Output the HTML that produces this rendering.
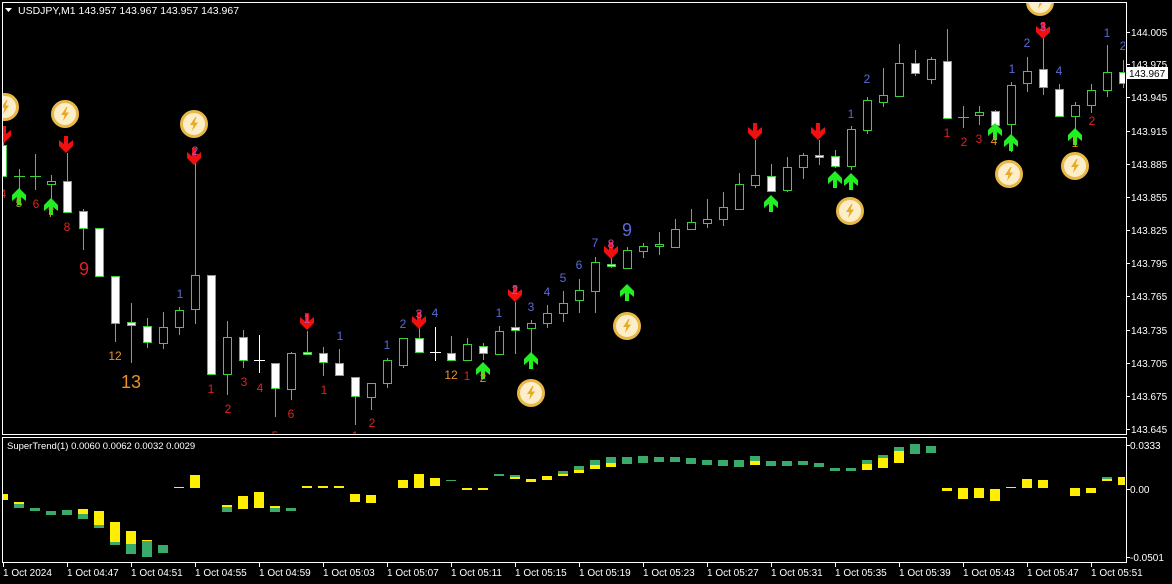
<!DOCTYPE html>
<html><head><meta charset="utf-8"><style>
html,body{margin:0;padding:0;background:#000;}
svg{display:block;font-family:"Liberation Sans",sans-serif;}
</style></head><body>
<svg width="1172" height="584" viewBox="0 0 1172 584" xmlns="http://www.w3.org/2000/svg">
<defs>
<clipPath id="cm"><rect x="3" y="3" width="1122" height="431"/></clipPath>
<clipPath id="ci"><rect x="3" y="439" width="1122" height="123"/></clipPath>
<g id="bolt"><circle r="12.5" fill="#fbeec8" stroke="#e9b847" stroke-width="3"/><path d="M1.5,-7 L-4,1 L-0.5,1 L-2,7 L4,-1.5 L0.5,-1.5 L2.5,-7 Z" fill="#e8a925"/></g>
<path id="dn" d="M-2,0 h4 v8 l5,-4 v6 l-7,7 l-7,-7 v-6 l5,4 z" fill="#f01010"/>
<path id="up" d="M-2,17 h4 v-8 l5,4 v-6 l-7,-7 l-7,7 v6 l5,-4 z" fill="#22ee22"/>
</defs>
<rect width="1172" height="584" fill="#000"/>
<!-- frames -->
<rect x="2.5" y="2.5" width="1124" height="432" fill="none" stroke="#fff"/>
<rect x="2.5" y="437.5" width="1124" height="125" fill="none" stroke="#fff"/>
<g clip-path="url(#cm)" shape-rendering="crispEdges" stroke="#3fcf3f" stroke-width="1">
<!-- wicks -->
<path fill="none" d="M3.5,140V176M19.5,169V190M35.5,154V190M51.5,175V199M67.5,153V212M83.5,209V250M99.5,228V276M115.5,276V342M131.5,303V363M147.5,318V348M163.5,312V349M179.5,307V335M195.5,160V324M211.5,275V374M227.5,321V395M243.5,330V368M275.5,363V417M291.5,352V400M307.5,331V355M323.5,347V376M339.5,349V376M355.5,377V425M371.5,383V410M387.5,358V388M403.5,338V368M419.5,328V352M451.5,336V360M467.5,338V360M483.5,343V360M499.5,326V355M515.5,302V354M531.5,320V355M547.5,305V328M563.5,291V322M579.5,279V313M595.5,257V313M611.5,257V268M627.5,247V268M643.5,243V258M659.5,232V255M675.5,219V248M691.5,209V229M707.5,199V228M723.5,192V226M739.5,173V209M755.5,140V188M771.5,164V191M787.5,157V192M803.5,153V179M819.5,140V165M835.5,150V168M851.5,126V170M867.5,97V134M883.5,68V107M899.5,44V96M915.5,50V76M931.5,57V84M947.5,29V118M963.5,106V128M979.5,106V125M995.5,110V126M1011.5,82V152M1027.5,57V92M1043.5,33V95M1059.5,84V116M1075.5,102V146M1091.5,84V113M1107.5,45V97M1123.5,60V88"/>
<path fill="none" d="M14,176.5H25M30,176.5H41M958,117.5H969"/>
<path fill="none" stroke="#fff" d="M259.5,335V373M254,360.5H265M435.5,327V361M430,352.5H441"/>
<!-- hollow bull bodies -->
<g fill="#000">
<rect x="47.5" y="181.5" width="8" height="3"/><rect x="159.5" y="327.5" width="8" height="16"/><rect x="175.5" y="310.5" width="8" height="17"/><rect x="191.5" y="275.5" width="8" height="34"/><rect x="223.5" y="337.5" width="8" height="37"/><rect x="287.5" y="353.5" width="8" height="36"/><rect x="367.5" y="383.5" width="8" height="14"/><rect x="383.5" y="360.5" width="8" height="23"/><rect x="399.5" y="338.5" width="8" height="27"/><rect x="463.5" y="344.5" width="8" height="16"/><rect x="495.5" y="331.5" width="8" height="23"/><rect x="527.5" y="323.5" width="8" height="5"/><rect x="543.5" y="313.5" width="8" height="10"/><rect x="559.5" y="303.5" width="8" height="10"/><rect x="575.5" y="290.5" width="8" height="10"/><rect x="591.5" y="262.5" width="8" height="29"/><rect x="623.5" y="250.5" width="8" height="18"/><rect x="639.5" y="246.5" width="8" height="5"/><rect x="655.5" y="244.5" width="8" height="2"/><rect x="671.5" y="229.5" width="8" height="18"/><rect x="687.5" y="222.5" width="8" height="7"/><rect x="703.5" y="219.5" width="8" height="4"/><rect x="719.5" y="207.5" width="8" height="12"/><rect x="735.5" y="184.5" width="8" height="25"/><rect x="751.5" y="175.5" width="8" height="10"/><rect x="783.5" y="167.5" width="8" height="23"/><rect x="799.5" y="155.5" width="8" height="12"/><rect x="847.5" y="129.5" width="8" height="37"/><rect x="863.5" y="100.5" width="8" height="30"/><rect x="879.5" y="95.5" width="8" height="7"/><rect x="895.5" y="63.5" width="8" height="33"/><rect x="927.5" y="59.5" width="8" height="20"/><rect x="975.5" y="112.5" width="8" height="3"/><rect x="1007.5" y="85.5" width="8" height="39"/><rect x="1023.5" y="71.5" width="8" height="12"/><rect x="1071.5" y="105.5" width="8" height="11"/><rect x="1087.5" y="90.5" width="8" height="15"/><rect x="1103.5" y="72.5" width="8" height="18"/>
</g>
<!-- white bear bodies -->
<g fill="#fff">
<rect x="-1.5" y="145.5" width="8" height="31"/><rect x="63.5" y="181.5" width="8" height="31"/><rect x="79.5" y="211.5" width="8" height="17"/><rect x="95.5" y="228.5" width="8" height="48"/><rect x="111.5" y="276.5" width="8" height="47"/><rect x="127.5" y="322.5" width="8" height="3"/><rect x="143.5" y="326.5" width="8" height="16"/><rect x="207.5" y="275.5" width="8" height="99"/><rect x="239.5" y="337.5" width="8" height="23"/><rect x="271.5" y="363.5" width="8" height="25"/><rect x="303.5" y="352.5" width="8" height="2"/><rect x="319.5" y="353.5" width="8" height="9"/><rect x="335.5" y="363.5" width="8" height="12"/><rect x="351.5" y="377.5" width="8" height="19"/><rect x="415.5" y="338.5" width="8" height="14"/><rect x="447.5" y="353.5" width="8" height="7"/><rect x="479.5" y="346.5" width="8" height="7"/><rect x="511.5" y="327.5" width="8" height="3"/><rect x="607.5" y="264.5" width="8" height="2"/><rect x="767.5" y="176.5" width="8" height="15"/><rect x="815.5" y="155.5" width="8" height="2"/><rect x="831.5" y="156.5" width="8" height="10"/><rect x="911.5" y="63.5" width="8" height="10"/><rect x="943.5" y="61.5" width="8" height="57"/><rect x="991.5" y="111.5" width="8" height="14"/><rect x="1039.5" y="69.5" width="8" height="18"/><rect x="1055.5" y="89.5" width="8" height="27"/><rect x="1119.5" y="72.5" width="8" height="11"/>
</g>
</g>
<g clip-path="url(#cm)">
<!-- arrows -->
<use href="#dn" x="4" y="126"/><use href="#dn" x="66" y="136"/><use href="#dn" x="194" y="148"/><use href="#dn" x="307" y="313"/><use href="#dn" x="419" y="312"/><use href="#dn" x="515" y="285"/><use href="#dn" x="611" y="242"/><use href="#dn" x="755" y="123"/><use href="#dn" x="818" y="123"/><use href="#dn" x="1043" y="22"/>
<use href="#up" x="19" y="188"/><use href="#up" x="51" y="198"/><use href="#up" x="483" y="362"/><use href="#up" x="531" y="352"/><use href="#up" x="627" y="284"/><use href="#up" x="771" y="195"/><use href="#up" x="835" y="171"/><use href="#up" x="851" y="173"/><use href="#up" x="995" y="123"/><use href="#up" x="1011" y="134"/><use href="#up" x="1075" y="128"/>
<use href="#bolt" x="5" y="107"/><use href="#bolt" x="65" y="114"/><use href="#bolt" x="194" y="124"/><use href="#bolt" x="531" y="393"/><use href="#bolt" x="627" y="326"/><use href="#bolt" x="850" y="211"/><use href="#bolt" x="1009" y="174"/><use href="#bolt" x="1075" y="166"/><use href="#bolt" x="1040" y="2"/>
<!-- numbers -->
<g font-size="12" text-anchor="middle">
<g fill="#e02020">
<text x="3" y="198">4</text><text x="36" y="208">6</text><text x="67" y="231">8</text><text x="84" y="275" font-size="18">9</text><text x="211" y="393">1</text><text x="228" y="413">2</text><text x="244" y="386">3</text><text x="260" y="392">4</text><text x="291" y="418">6</text><text x="275" y="440">5</text><text x="324" y="394">1</text><text x="372" y="427">2</text><text x="355" y="440">1</text><text x="467" y="380">1</text><text x="947" y="137">1</text><text x="964" y="146">2</text><text x="979" y="143">3</text><text x="1092" y="125">2</text>
</g>
<g fill="#e8902a">
<text x="115" y="360">12</text><text x="131" y="388" font-size="18">13</text><text x="451" y="379">12</text><text x="19" y="207" fill="#a8a020">5</text><text x="51" y="217" fill="#a8a020">7</text><text x="483" y="382">2</text><text x="994" y="145">4</text><text x="1075" y="147">1</text>
</g>
<g fill="#5a6ad8">
<text x="180" y="298">1</text><text x="340" y="340">1</text><text x="387" y="349">1</text><text x="403" y="328">2</text><text x="435" y="317">4</text><text x="499" y="317">1</text><text x="531" y="311">3</text><text x="547" y="296">4</text><text x="563" y="282">5</text><text x="579" y="269">6</text><text x="595" y="247">7</text><text x="627" y="236" font-size="18">9</text><text x="851" y="118">1</text><text x="867" y="83">2</text><text x="1012" y="73">1</text><text x="1027" y="47">2</text><text x="1059" y="75">4</text><text x="1107" y="37">1</text><text x="1123" y="50">2</text>
</g>
<g fill="#c050b0">
<text x="195" y="155">2</text><text x="307" y="323">1</text><text x="419" y="318">3</text><text x="515" y="294">2</text><text x="611" y="248">8</text><text x="1043" y="31">3</text>
</g>
</g>
</g>
<!-- title -->
<path d="M5,8 h7 l-3.5,4 z" fill="#fff"/>
<text x="18" y="14" font-size="10.5" fill="#fff">USDJPY,M1  143.957 143.967 143.957 143.967</text>
<!-- price axis -->
<g font-size="10" fill="#fff" shape-rendering="crispEdges">
<path stroke="#fff" d="M1127,32.5h3M1127,64.5h3M1127,97.5h3M1127,131.5h3M1127,164.5h3M1127,197.5h3M1127,230.5h3M1127,263.5h3M1127,296.5h3M1127,330.5h3M1127,363.5h3M1127,396.5h3M1127,429.5h3M1127,445.5h3M1127,489.5h3M1127,557.5h3"/>
<text x="1131" y="36">144.005</text><text x="1131" y="68">143.975</text><text x="1131" y="101">143.945</text><text x="1131" y="135">143.915</text><text x="1131" y="168">143.885</text><text x="1131" y="201">143.855</text><text x="1131" y="234">143.825</text><text x="1131" y="267">143.795</text><text x="1131" y="300">143.765</text><text x="1131" y="334">143.735</text><text x="1131" y="367">143.705</text><text x="1131" y="400">143.675</text><text x="1131" y="433">143.645</text>
<rect x="1127" y="67" width="41" height="12" fill="#fff"/><text x="1129" y="77" fill="#000">143.967</text>
<text x="1130" y="449">0.0333</text><text x="1130" y="493">0.00</text><text x="1130" y="561">-0.0501</text>
</g>
<!-- indicator -->
<text x="7" y="449" font-size="9.5" fill="#fff">SuperTrend(1) 0.0060 0.0062 0.0032 0.0029</text>
<g clip-path="url(#ci)" shape-rendering="crispEdges">
<g fill="#ffee00">
<rect x="-2" y="494" width="10" height="6"/><rect x="14" y="502" width="10" height="2"/><rect x="78" y="509" width="10" height="5"/><rect x="94" y="511" width="10" height="14"/><rect x="110" y="522" width="10" height="20"/><rect x="126" y="531" width="10" height="13"/><rect x="142" y="540" width="10" height="1"/><rect x="174" y="487" width="10" height="1"/><rect x="190" y="475" width="10" height="13"/><rect x="222" y="505" width="10" height="2"/><rect x="238" y="496" width="10" height="13"/><rect x="254" y="492" width="10" height="16"/><rect x="270" y="506" width="10" height="2"/><rect x="302" y="486" width="10" height="2"/><rect x="318" y="486" width="10" height="2"/><rect x="334" y="486" width="10" height="2"/><rect x="350" y="494" width="10" height="8"/><rect x="366" y="495" width="10" height="8"/><rect x="398" y="480" width="10" height="8"/><rect x="414" y="474" width="10" height="14"/><rect x="430" y="478" width="10" height="8"/><rect x="462" y="488" width="10" height="2"/><rect x="478" y="488" width="10" height="2"/><rect x="510" y="477" width="10" height="2"/><rect x="526" y="479" width="10" height="3"/><rect x="542" y="476" width="10" height="4"/><rect x="558" y="474" width="10" height="2"/><rect x="574" y="470" width="10" height="3"/><rect x="590" y="465" width="10" height="4"/><rect x="606" y="463" width="10" height="4"/><rect x="750" y="461" width="10" height="4"/><rect x="862" y="464" width="10" height="6"/><rect x="878" y="458" width="10" height="10"/><rect x="894" y="451" width="10" height="12"/><rect x="942" y="488" width="10" height="3"/><rect x="958" y="488" width="10" height="11"/><rect x="974" y="488" width="10" height="10"/><rect x="990" y="489" width="10" height="12"/><rect x="1006" y="487" width="10" height="1"/><rect x="1022" y="479" width="10" height="9"/><rect x="1038" y="480" width="10" height="8"/><rect x="1070" y="488" width="10" height="8"/><rect x="1086" y="488" width="10" height="5"/><rect x="1102" y="479" width="10" height="2"/><rect x="1118" y="477" width="10" height="8"/>
</g>
<g fill="#3aaa6a">
<rect x="14" y="504" width="10" height="4"/><rect x="30" y="508" width="10" height="3"/><rect x="46" y="511" width="10" height="4"/><rect x="62" y="510" width="10" height="5"/><rect x="78" y="514" width="10" height="5"/><rect x="94" y="525" width="10" height="3"/><rect x="110" y="542" width="10" height="3"/><rect x="126" y="544" width="10" height="10"/><rect x="142" y="541" width="10" height="16"/><rect x="158" y="545" width="10" height="8"/><rect x="222" y="507" width="10" height="5"/><rect x="270" y="508" width="10" height="4"/><rect x="286" y="508" width="10" height="3"/><rect x="446" y="480" width="10" height="1"/><rect x="494" y="474" width="10" height="2"/><rect x="510" y="475" width="10" height="2"/><rect x="558" y="471" width="10" height="3"/><rect x="574" y="466" width="10" height="4"/><rect x="590" y="460" width="10" height="5"/><rect x="606" y="457" width="10" height="6"/><rect x="622" y="457" width="10" height="7"/><rect x="638" y="456" width="10" height="7"/><rect x="654" y="457" width="10" height="5"/><rect x="670" y="457" width="10" height="5"/><rect x="686" y="458" width="10" height="6"/><rect x="702" y="460" width="10" height="5"/><rect x="718" y="460" width="10" height="6"/><rect x="734" y="460" width="10" height="7"/><rect x="750" y="456" width="10" height="5"/><rect x="766" y="461" width="10" height="5"/><rect x="782" y="461" width="10" height="5"/><rect x="798" y="461" width="10" height="4"/><rect x="814" y="463" width="10" height="4"/><rect x="830" y="468" width="10" height="3"/><rect x="846" y="468" width="10" height="3"/><rect x="862" y="460" width="10" height="4"/><rect x="878" y="455" width="10" height="3"/><rect x="894" y="447" width="10" height="4"/><rect x="910" y="444" width="10" height="10"/><rect x="926" y="446" width="10" height="7"/><rect x="1102" y="477" width="10" height="2"/>
</g>
</g>
<!-- time axis -->
<g font-size="10" fill="#fff">
<path stroke="#fff" shape-rendering="crispEdges" d="M3.5,563v4M67.5,563v4M131.5,563v4M195.5,563v4M259.5,563v4M323.5,563v4M387.5,563v4M451.5,563v4M515.5,563v4M579.5,563v4M643.5,563v4M707.5,563v4M771.5,563v4M835.5,563v4M899.5,563v4M963.5,563v4M1027.5,563v4M1091.5,563v4"/>
<text x="3" y="576">1 Oct 2024</text><text x="67" y="576">1 Oct 04:47</text><text x="131" y="576">1 Oct 04:51</text><text x="195" y="576">1 Oct 04:55</text><text x="259" y="576">1 Oct 04:59</text><text x="323" y="576">1 Oct 05:03</text><text x="387" y="576">1 Oct 05:07</text><text x="451" y="576">1 Oct 05:11</text><text x="515" y="576">1 Oct 05:15</text><text x="579" y="576">1 Oct 05:19</text><text x="643" y="576">1 Oct 05:23</text><text x="707" y="576">1 Oct 05:27</text><text x="771" y="576">1 Oct 05:31</text><text x="835" y="576">1 Oct 05:35</text><text x="899" y="576">1 Oct 05:39</text><text x="963" y="576">1 Oct 05:43</text><text x="1027" y="576">1 Oct 05:47</text><text x="1091" y="576">1 Oct 05:51</text>
</g>
</svg>
</body></html>
